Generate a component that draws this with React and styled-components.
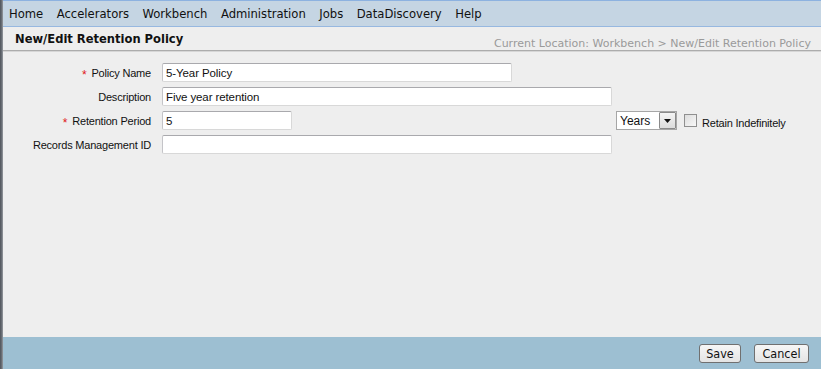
import React from "react";
import styled, { createGlobalStyle } from "styled-components";

const GlobalStyle = createGlobalStyle`
  html, body {
    margin: 0;
    padding: 0;
    background: #eeeeee;
  }
  * {
    box-sizing: border-box;
  }
`;

const Page = styled.div`
  display: flex;
  width: 821px;
  height: 369px;
  overflow: hidden;
`;

const LeftEdge = styled.div`
  width: 3px;
  background: linear-gradient(to right, #4f545b, #6d7279 60%, #9a9ea3);
`;

const Main = styled.div`
  flex: 1;
  display: flex;
  flex-direction: column;
  background: #eeeeee;
`;

const MenuBar = styled.nav`
  height: 27px;
  display: flex;
  align-items: center;
  gap: 13.5px;
  padding-left: 6px;
  background: #c5d5e3;
  border-top: 1px solid #8db2e0;
  border-bottom: 1px solid #97b8e0;
  font-family: "DejaVu Sans Condensed", "DejaVu Sans", sans-serif;
  font-size: 12.9px;
  color: #111;
`;

const MenuItem = styled.span`
  padding-bottom: 1px;
`;

const Header = styled.div`
  height: 24px;
  display: flex;
  align-items: center;
  justify-content: space-between;
  padding: 0 10px 0 12px;
  border-bottom: 1px solid #acacac;
  box-shadow: 0 1px 0 #d6d6d6;
`;

const Title = styled.h1`
  margin: 0;
  font-family: "DejaVu Sans Condensed", "DejaVu Sans", sans-serif;
  font-weight: bold;
  font-size: 12.8px;
  color: #111;
`;

const Crumb = styled.span`
  font-family: "DejaVu Sans", sans-serif;
  font-size: 11px;
  color: #9a9a9a;
  padding-top: 9px;
`;

const Form = styled.div`
  flex: 1;
  display: grid;
  grid-template-columns: 148px 1fr;
  grid-auto-rows: 19px;
  row-gap: 5px;
  column-gap: 11px;
  align-content: start;
  padding-top: 12px;
  font-family: "Liberation Sans", Arial, sans-serif;
  font-size: 11px;
  letter-spacing: -0.2px;
  color: #111;
`;

const Label = styled.label`
  display: flex;
  align-items: center;
  justify-content: flex-end;
  gap: 5px;
`;

const Req = styled.span`
  color: #e01818;
  font-size: 12px;
  line-height: 1;
  margin-top: 4px;
`;

const Input = styled.input`
  width: ${(p) => p.$w}px;
  height: 19px;
  padding: 0 3px;
  border: 1px solid #d8d8d8;
  border-top-color: #a9a9ad;
  border-left-color: #c4c4c8;
  border-radius: 2px;
  background: #fff;
  font-family: "Liberation Sans", Arial, sans-serif;
  font-size: 11.5px;
  letter-spacing: -0.1px;
  color: #111;
  outline: none;
`;

const PeriodRow = styled.div`
  display: flex;
  align-items: center;
`;

const PeriodSlot = styled.div`
  width: 454px;
`;

const Select = styled.div`
  width: 61px;
  height: 19px;
  display: flex;
  align-items: center;
  justify-content: space-between;
  background: #fff;
  border: 1px solid #a6a6a6;
  padding-left: 3px;
  font-family: "Liberation Sans", Arial, sans-serif;
  font-size: 12px;
  letter-spacing: 0;
`;

const SelectArrow = styled.span`
  width: 17px;
  height: 17px;
  display: flex;
  align-items: center;
  justify-content: center;
  background: linear-gradient(#f4f4f4, #dcdcdc);
  border: 1px solid #8a8a8a;
  border-radius: 1px;
`;

const Check = styled.span`
  width: 13px;
  height: 13px;
  margin-left: 7px;
  border: 1px solid #8f8f8f;
  background: linear-gradient(135deg, #dcdcdc, #f8f8f8);
`;

const CheckText = styled.span`
  margin-left: 5px;
  padding-top: 4px;
`;

const Footer = styled.div`
  height: 32px;
  display: flex;
  align-items: center;
  justify-content: flex-end;
  gap: 13px;
  padding: 0 12px 0 0;
  background: #9dbfd2;
`;

const Button = styled.button`
  height: 19px;
  min-width: ${(p) => p.$w}px;
  padding: 0 6px;
  border: 1px solid #707070;
  border-radius: 3px;
  background: linear-gradient(#f6f6f6, #e4e4e4);
  font-family: "DejaVu Sans Condensed", "DejaVu Sans", sans-serif;
  font-size: 12.5px;
  color: #111;
`;

const menu = ["Home", "Accelerators", "Workbench", "Administration", "Jobs", "DataDiscovery", "Help"];

export default function App() {
  return (
    <Page>
      <GlobalStyle />
      <LeftEdge />
      <Main>
        <MenuBar>
          {menu.map((m) => (
            <MenuItem key={m}>{m}</MenuItem>
          ))}
        </MenuBar>
        <Header>
          <Title>New/Edit Retention Policy</Title>
          <Crumb>Current Location: Workbench &gt; New/Edit Retention Policy</Crumb>
        </Header>
        <Form>
          <Label>
            <Req>*</Req>Policy Name
          </Label>
          <Input $w={350} defaultValue="5-Year Policy" />
          <Label>Description</Label>
          <Input $w={450} defaultValue="Five year retention" />
          <Label>
            <Req>*</Req>Retention Period
          </Label>
          <PeriodRow>
            <PeriodSlot>
              <Input $w={130} defaultValue="5" />
            </PeriodSlot>
            <Select>
              Years
              <SelectArrow>
                <svg width="7" height="4" viewBox="0 0 7 4">
                  <path d="M0 0h7L3.5 4z" fill="#111" />
                </svg>
              </SelectArrow>
            </Select>
            <Check />
            <CheckText>Retain Indefinitely</CheckText>
          </PeriodRow>
          <Label>Records Management ID</Label>
          <Input $w={450} defaultValue="" />
        </Form>
        <Footer>
          <Button $w={42}>Save</Button>
          <Button $w={55}>Cancel</Button>
        </Footer>
      </Main>
    </Page>
  );
}
